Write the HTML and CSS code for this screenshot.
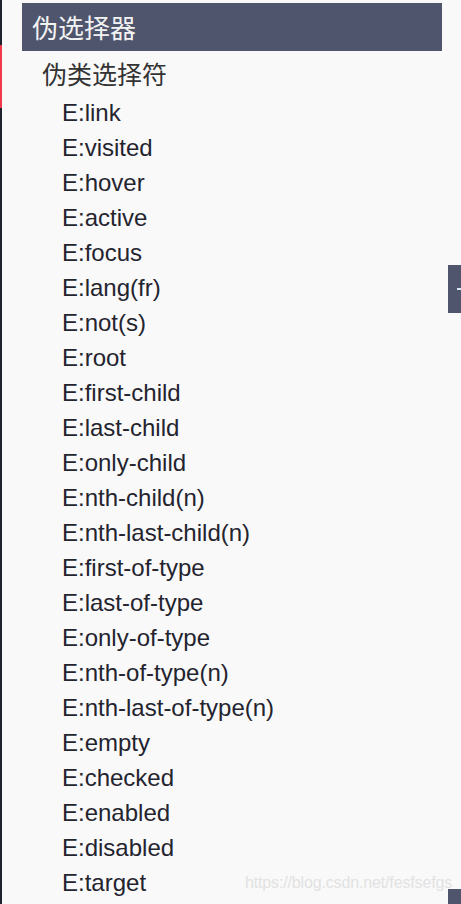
FILE: index.html
```
<!DOCTYPE html>
<html lang="zh-CN">
<head>
<meta charset="utf-8">
<title>伪选择器</title>
<link rel="stylesheet" href="styles.css">
</head>
<body>
<div class="page">
  <div class="strip"><div class="strip-active"></div></div>
  <main class="main">
    <h1 class="title">伪选择器</h1>
    <section class="group">
      <h2 class="group-title">伪类选择符</h2>
      <ul class="list">
        <li>E:link</li>
        <li>E:visited</li>
        <li>E:hover</li>
        <li>E:active</li>
        <li>E:focus</li>
        <li>E:lang(fr)</li>
        <li>E:not(s)</li>
        <li>E:root</li>
        <li>E:first-child</li>
        <li>E:last-child</li>
        <li>E:only-child</li>
        <li>E:nth-child(n)</li>
        <li>E:nth-last-child(n)</li>
        <li>E:first-of-type</li>
        <li>E:last-of-type</li>
        <li>E:only-of-type</li>
        <li>E:nth-of-type(n)</li>
        <li>E:nth-last-of-type(n)</li>
        <li>E:empty</li>
        <li>E:checked</li>
        <li>E:enabled</li>
        <li>E:disabled</li>
        <li>E:target</li>
      </ul>
    </section>
  </main>
  <div class="side-tab"><span class="side-tab-mark"></span></div>
  <div class="corner-box"></div>
  <div class="watermark">https://blog.csdn.net/fesfsefgs</div>
</div>
</body>
</html>
```
FILE: styles.css
```
html, body {
  margin: 0;
  padding: 0;
  background: #f9f9f9;
}
.page {
  position: relative;
  display: flex;
  width: 461px;
  height: 904px;
  overflow: hidden;
  font-family: "Liberation Sans", "Noto Sans CJK SC", sans-serif;
}
.strip {
  width: 2px;
  flex: none;
  background: #1f2230;
  padding-top: 45px;
}
.strip-active {
  height: 63px;
  background: #f03a4c;
}
.main {
  padding: 3px 0 0 20px;
  width: 420px;
}
.title {
  margin: 0;
  height: 48px;
  line-height: 47px;
  padding-left: 10px;
  background: #4f556d;
  color: #f2f2f2;
  font-family: "Noto Sans CJK SC", sans-serif;
  font-weight: normal;
  font-size: 26px;
}
.group-title {
  margin: 0;
  padding-left: 20px;
  height: 44px;
  line-height: 44px;
  font-family: "Noto Sans CJK SC", sans-serif;
  font-weight: normal;
  font-size: 25px;
  color: #333;
}
.list {
  list-style: none;
  margin: 0;
  padding: 0 0 0 40px;
}
.list li {
  height: 35px;
  line-height: 35px;
  font-size: 24px;
  color: #24242f;
}
.side-tab {
  position: absolute;
  left: 448px;
  top: 265px;
  width: 20px;
  height: 48px;
  background: #4f556d;
}
.side-tab-mark {
  position: absolute;
  left: 9px;
  top: 23px;
  width: 6px;
  height: 2px;
  background: #d8e8f0;
}
.corner-box {
  position: absolute;
  left: 448px;
  top: 889px;
  width: 20px;
  height: 20px;
  background: #4f556d;
}
.watermark {
  position: absolute;
  left: 245px;
  top: 874px;
  font-size: 16px;
  letter-spacing: -0.15px;
  color: #e2e2e2;
  white-space: nowrap;
}
```
